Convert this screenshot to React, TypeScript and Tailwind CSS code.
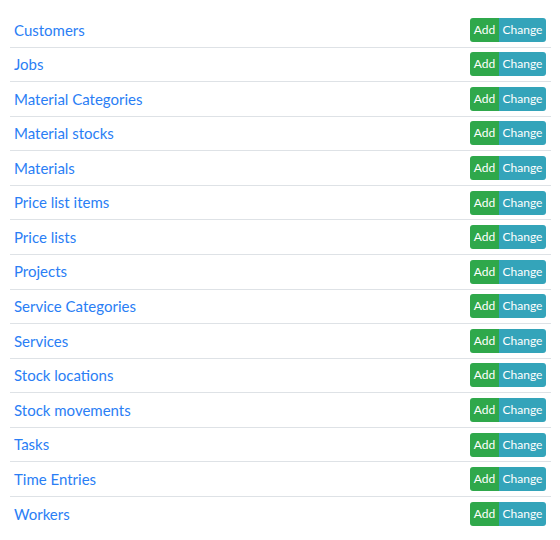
const models = [
  'Customers',
  'Jobs',
  'Material Categories',
  'Material stocks',
  'Materials',
  'Price list items',
  'Price lists',
  'Projects',
  'Service Categories',
  'Services',
  'Stock locations',
  'Stock movements',
  'Tasks',
  'Time Entries',
  'Workers',
];

export default function App() {
  return (
    <div className="min-h-[540px] bg-white pt-[13px] pl-[10px] pr-[9px] font-['Lato','Liberation_Sans',sans-serif]">
      <div className="divide-y divide-[#dee2e6]">
        {models.map((name) => (
          <div key={name} className="flex h-[34.57px] items-center justify-between pl-1 pr-[5px]">
            <a href="#" className="text-[15px] text-[#2a7ef5]">
              {name}
            </a>
            <div className="flex h-6 overflow-hidden rounded-[3px] text-[12px] text-white">
              <a href="#" className="flex w-[29px] items-center justify-center bg-[#2fa84b]">
                Add
              </a>
              <a href="#" className="flex w-[47px] items-center justify-center bg-[#34a4ba]">
                Change
              </a>
            </div>
          </div>
        ))}
      </div>
    </div>
  );
}
